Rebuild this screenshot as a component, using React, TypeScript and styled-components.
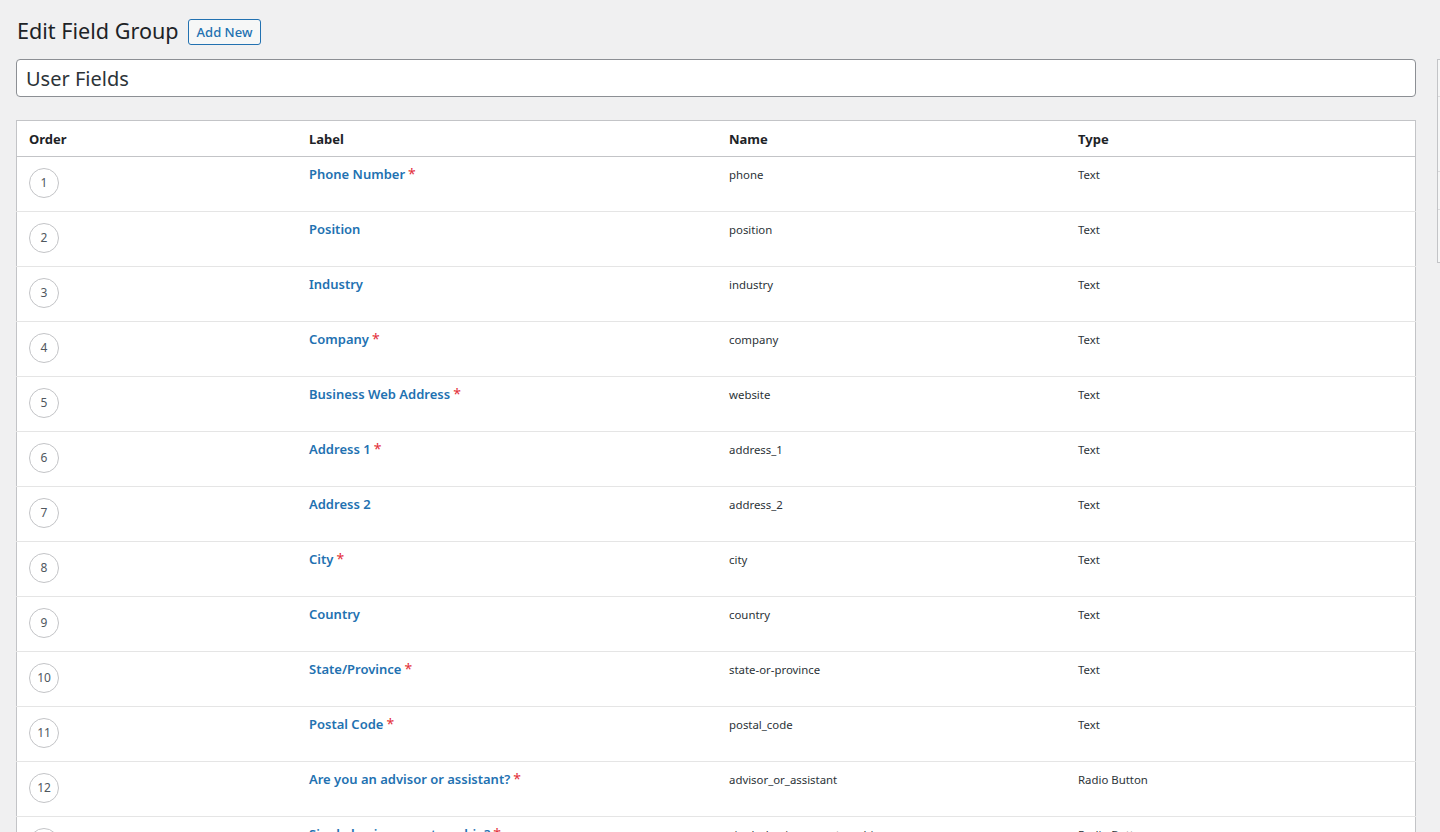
import React from "react";
import styled, { createGlobalStyle } from "styled-components";

const GlobalStyle = createGlobalStyle`
  html, body {
    margin: 0;
    padding: 0;
    background: #f0f0f1;
    overflow: hidden;
  }
  body {
    font-family: "Noto Sans", "Open Sans", sans-serif;
    color: #3c434a;
  }
`;

const Page = styled.div`
  display: grid;
  grid-template-columns: 1400px 280px;
  column-gap: 21px;
  padding: 0 0 0 16px;
  width: max-content;
`;

const Main = styled.div`
  display: flex;
  flex-direction: column;
`;

const HeaderRow = styled.div`
  display: flex;
  align-items: center;
  gap: 9px;
  height: 59px;
  padding-left: 1px;
`;

const Title = styled.h1`
  margin: 3px 0 0;
  font-size: 21.6px;
  font-weight: 400;
  color: #1d2327;
  line-height: 1;
`;

const AddButton = styled.button`
  font-family: inherit;
  font-size: 13px;
  font-weight: 500;
  color: #2271b1;
  background: #f6f7f7;
  border: 1px solid #2271b1;
  border-radius: 3px;
  height: 26px;
  padding: 0 8px;
  margin-top: 4px;
  cursor: pointer;
`;

const TitleInput = styled.input`
  box-sizing: border-box;
  width: 100%;
  height: 38px;
  padding: 0 9px;
  font-family: inherit;
  font-size: 20px;
  color: #2c3338;
  background: #fff;
  border: 1px solid #8c8f94;
  border-radius: 4px;
  outline: none;
`;

const Table = styled.table`
  margin-top: 23px;
  width: 100%;
  border-collapse: collapse;
  table-layout: fixed;
  background: #fff;
  border: 1px solid #c3c4c7;
`;

const Th = styled.th<{ $w: number }>`
  width: ${(p) => p.$w}px;
  text-align: left;
  font-size: 13px;
  font-weight: 700;
  color: #1d2327;
  height: 35px;
  padding: 0 12px;
  border-bottom: 1px solid #c3c4c7;
`;

const Tr = styled.tr`
  & + & td {
    border-top: 1px solid #e5e5e5;
  }
`;

const Td = styled.td<{ $pt?: number }>`
  vertical-align: top;
  height: 55px;
  padding: ${(p) => p.$pt ?? 8}px 12px 0;
  box-sizing: border-box;
  font-size: 11.4px;
  color: #2c3338;
  line-height: 20px;
`;

const OrderCircle = styled.span`
  display: flex;
  align-items: center;
  justify-content: center;
  box-sizing: border-box;
  width: 30px;
  height: 30px;
  margin-top: 3px;
  border: 1px solid #c3c4c7;
  border-radius: 50%;
  font-size: 12px;
  color: #50575e;
`;

const LabelLink = styled.a`
  font-size: 13px;
  font-weight: 600;
  color: #2271b1;
  text-decoration: none;
`;

const Required = styled.span`
  color: #e3303a;
  font-size: 14px;
  margin-left: 3px;
`;

const Sidebar = styled.div`
  margin-top: 59px;
  box-sizing: border-box;
  height: 204px;
  border: 1px solid #c3c4c7;
  background: #f6f7f7;
  display: grid;
  grid-template-rows: 36px 75px 38px 1fr;
`;

const SideSection = styled.div`
  & + & {
    border-top: 1px solid #dcdcde;
  }
`;

type Field = { label: string; name: string; type: string; required?: boolean };

const fields: Field[] = [
  { label: "Phone Number", name: "phone", type: "Text", required: true },
  { label: "Position", name: "position", type: "Text" },
  { label: "Industry", name: "industry", type: "Text" },
  { label: "Company", name: "company", type: "Text", required: true },
  { label: "Business Web Address", name: "website", type: "Text", required: true },
  { label: "Address 1", name: "address_1", type: "Text", required: true },
  { label: "Address 2", name: "address_2", type: "Text" },
  { label: "City", name: "city", type: "Text", required: true },
  { label: "Country", name: "country", type: "Text" },
  { label: "State/Province", name: "state-or-province", type: "Text", required: true },
  { label: "Postal Code", name: "postal_code", type: "Text", required: true },
  { label: "Are you an advisor or assistant?", name: "advisor_or_assistant", type: "Radio Button", required: true },
  { label: "Single business partnership?", name: "single_business_partnership", type: "Radio Button", required: true },
];

export default function App() {
  return (
    <>
      <GlobalStyle />
      <Page>
        <Main>
          <HeaderRow>
            <Title>Edit Field Group</Title>
            <AddButton>Add New</AddButton>
          </HeaderRow>
          <TitleInput defaultValue="User Fields" />
          <Table>
            <thead>
              <tr>
                <Th $w={256}>Order</Th>
                <Th $w={396}>Label</Th>
                <Th $w={325}>Name</Th>
                <Th $w={325}>Type</Th>
              </tr>
            </thead>
            <tbody>
              {fields.map((f, i) => (
                <Tr key={f.name}>
                  <Td>
                    <OrderCircle>{i + 1}</OrderCircle>
                  </Td>
                  <Td $pt={7}>
                    <LabelLink href="#">{f.label}</LabelLink>
                    {f.required && <Required>*</Required>}
                  </Td>
                  <Td>{f.name}</Td>
                  <Td>{f.type}</Td>
                </Tr>
              ))}
            </tbody>
          </Table>
        </Main>
        <Sidebar>
          <SideSection />
          <SideSection />
          <SideSection />
          <SideSection />
        </Sidebar>
      </Page>
    </>
  );
}
